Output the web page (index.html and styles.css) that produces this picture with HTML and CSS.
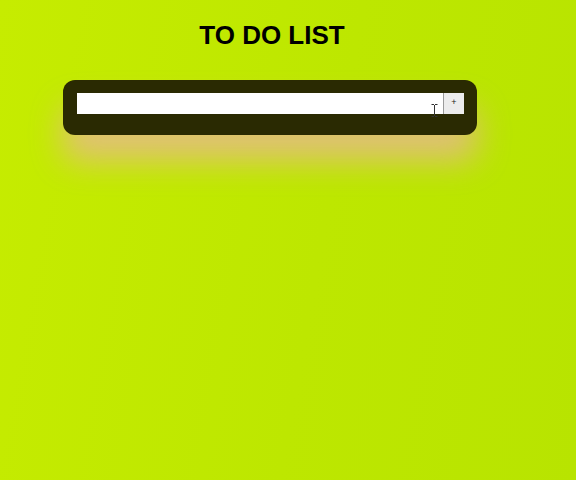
FILE: index.html
```html
<!DOCTYPE html>
<html>
<head>
<meta charset="utf-8">
<link rel="stylesheet" href="styles.css">
</head>
<body>
<main class="app">
  <h1 class="title">TO DO LIST</h1>
  <section class="card">
    <form class="add-row">
      <input class="task-input" type="text">
      <button class="add-btn" type="button">+</button>
    </form>
    <ul class="tasks"></ul>
    <svg class="ibeam" width="7" height="13" viewBox="0 0 7 13"><path d="M0.5 0.5h2.5M4 0.5h2.5M3.5 1v11M0.5 12.5h2.5M4 12.5h2.5" stroke="#333" stroke-width="1" fill="none"/></svg>
  </section>
</main>
</body>
</html>
```
FILE: styles.css
```css
html, body {
  margin: 0;
  padding: 0;
  height: 100%;
}
body {
  background: linear-gradient(100deg, #c6ec00 0%, #bde700 55%, #b8e400 100%);
  font-family: "Liberation Sans", Arial, sans-serif;
}
.app {
  display: flex;
  flex-direction: column;
  width: 414px;
  margin-left: 63px;
  padding-top: 21px;
}
.title {
  margin: 0;
  padding-left: 4px;
  text-align: center;
  font-size: 26px;
  font-weight: bold;
  line-height: 28px;
  color: #000;
}
.card {
  position: relative;
  margin-top: 31px;
  width: 414px;
  box-sizing: border-box;
  padding: 13px 13px 21px 14px;
  background: #2a2a02;
  border-radius: 12px;
  box-shadow: 0 26px 32px rgba(235, 178, 160, 0.72);
}
.add-row {
  display: flex;
  margin: 0;
  height: 21px;
}
.task-input {
  flex: 1;
  border: none;
  margin: 0;
  padding: 0 4px;
  height: 21px;
  background: #fff;
  outline: none;
}
.add-btn {
  width: 21px;
  height: 21px;
  margin: 0;
  padding: 0 0 4px 0;
  border: none;
  border-left: 1px solid #9a9a9a;
  background: #ececec;
  color: #222;
  font-size: 9px;
  line-height: 8px;
  font-family: "Liberation Sans", Arial, sans-serif;
}
.tasks {
  margin: 0;
  padding: 0;
  list-style: none;
}
.ibeam {
  position: absolute;
  left: 368px;
  top: 24px;
}
```
